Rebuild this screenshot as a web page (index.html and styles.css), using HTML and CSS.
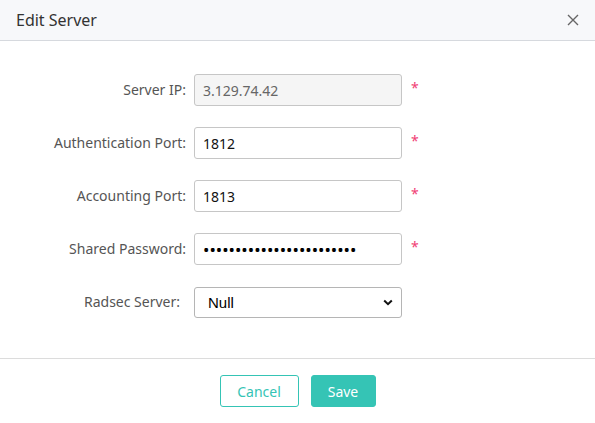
FILE: index.html
```html
<!DOCTYPE html>
<html lang="en">
<head>
<meta charset="utf-8">
<title>Edit Server</title>
<link rel="stylesheet" href="styles.css">
</head>
<body>
<div class="dialog">
  <div class="dialog-header">
    <span class="dialog-title">Edit Server</span>
    <button class="close-btn" type="button" aria-label="Close">
      <svg width="12" height="12" viewBox="0 0 12 12"><path d="M1 1L11 11M11 1L1 11" stroke="#666" stroke-width="1.4" fill="none"/></svg>
    </button>
  </div>
  <form class="dialog-body">
    <div class="form-row">
      <label class="form-label">Server IP:</label>
      <input class="form-input" type="text" value="3.129.74.42" disabled>
      <span class="required">*</span>
    </div>
    <div class="form-row">
      <label class="form-label">Authentication Port:</label>
      <input class="form-input" type="text" value="1812">
      <span class="required">*</span>
    </div>
    <div class="form-row">
      <label class="form-label">Accounting Port:</label>
      <input class="form-input" type="text" value="1813">
      <span class="required">*</span>
    </div>
    <div class="form-row">
      <label class="form-label">Shared Password:</label>
      <input class="form-input form-password" type="password" value="abcdefghijklmnopqrstuvwx">
      <span class="required">*</span>
    </div>
    <div class="form-row">
      <label class="form-label select-label">Radsec Server:</label>
      <div class="select-wrap">
        <select class="form-select">
          <option>Null</option>
        </select>
        <svg class="select-arrow" width="10" height="7" viewBox="0 0 10 7"><path d="M1.2 1.5L5 5.2L8.8 1.5" stroke="#111" stroke-width="2" fill="none"/></svg>
      </div>
    </div>
  </form>
  <div class="dialog-footer">
    <button class="btn btn-cancel" type="button">Cancel</button>
    <button class="btn btn-save" type="button">Save</button>
  </div>
</div>
</body>
</html>
```
FILE: styles.css
```css
html, body {
  margin: 0;
  padding: 0;
  background: #fff;
}

body {
  font-family: "Noto Sans", "Open Sans", sans-serif;
  color: #333;
}

.dialog {
  width: 595px;
  height: 423px;
  display: flex;
  flex-direction: column;
}

.dialog-header {
  height: 40px;
  background: #f7f8fa;
  border-bottom: 1px solid #d6d9de;
  display: flex;
  align-items: center;
  justify-content: space-between;
  padding: 0 16px 0 16px;
}

.dialog-title {
  font-size: 16px;
  color: #333;
}

.close-btn {
  border: none;
  background: none;
  padding: 0;
  width: 12px;
  height: 12px;
  display: flex;
}

.dialog-body {
  margin: 0;
  padding: 33px 0 40px;
  display: flex;
  flex-direction: column;
  gap: 21px;
  border-bottom: 1px solid #dcdcdc;
}

.form-row {
  display: flex;
  align-items: center;
  height: 32px;
}

.form-label {
  width: 186px;
  margin-right: 8px;
  margin-top: -2px;
  text-align: right;
  font-size: 14px;
  color: #555;
}

.form-input {
  box-sizing: border-box;
  width: 208px;
  height: 32px;
  border: 1px solid #c6c6c6;
  border-radius: 3px;
  padding: 0 8px;
  font-family: "Noto Sans", sans-serif;
  font-size: 14px;
  color: #111;
  background: #fff;
  outline: none;
}

.form-password {
  font-size: 17px;
  color: #000;
}

.form-input:disabled {
  background: #f5f5f5;
  color: #666;
}

.required {
  margin-left: 9px;
  margin-top: -4px;
  color: #f03e74;
  font-size: 14px;
  line-height: 1;
}

.select-label {
  width: 180px;
  margin-right: 14px;
}

.select-wrap {
  position: relative;
  width: 208px;
  height: 31px;
}

.form-select {
  box-sizing: border-box;
  appearance: none;
  width: 100%;
  height: 100%;
  border: 1px solid #b5b5b5;
  border-radius: 3px;
  padding: 0 0 0 13px;
  font-family: "Liberation Sans", Arial, sans-serif;
  font-size: 15px;
  color: #000;
  background: #fff;
}

.select-arrow {
  position: absolute;
  right: 9px;
  top: 12px;
  pointer-events: none;
}

.dialog-footer {
  flex: 1;
  display: flex;
  justify-content: center;
  align-items: flex-start;
  gap: 12px;
  padding-top: 16px;
}

.btn {
  box-sizing: border-box;
  height: 32px;
  border-radius: 3px;
  font-family: "Noto Sans", sans-serif;
  font-size: 14px;
  cursor: pointer;
}

.btn-cancel {
  width: 79px;
  background: #fff;
  border: 1px solid #35c4b5;
  color: #35c4b5;
}

.btn-save {
  width: 65px;
  background: #35c4b5;
  border: 1px solid #35c4b5;
  color: #fff;
}
```
